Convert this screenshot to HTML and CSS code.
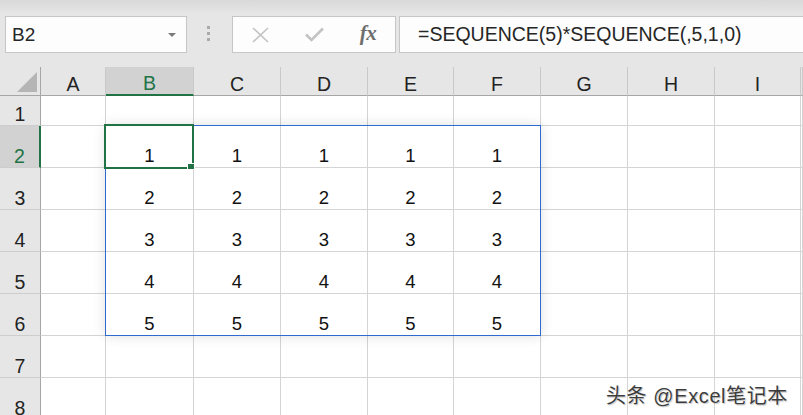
FILE: index.html
```html
<!DOCTYPE html>
<html lang="zh">
<head>
<meta charset="utf-8">
<title>SEQUENCE</title>
<link rel="stylesheet" href="styles.css">
</head>
<body>
<div class="app">
  <div class="toolbar">
    <div class="namebox">
      <span class="name">B2</span>
      <svg class="dd" width="8" height="4" viewBox="0 0 8 4"><path d="M0 0H8L4 4Z" fill="#7a7a7a"/></svg>
    </div>
    <div class="grip"><i></i><i></i><i></i></div>
    <div class="fbtns">
      <span class="btn"><svg width="17" height="16" viewBox="0 0 17 16"><path d="M1 1L16 15M16 1L1 15" stroke="#c3c3c3" stroke-width="1.6" fill="none"/></svg></span>
      <span class="btn"><svg width="19" height="15" viewBox="0 0 19 15"><path d="M1 7.5L6.5 13L18 1.5" stroke="#c3c3c3" stroke-width="2.6" fill="none"/></svg></span>
      <span class="btn fx">fx</span>
    </div>
    <div class="formula">=SEQUENCE(5)*SEQUENCE(,5,1,0)</div>
  </div>

  <div class="sheet">
    <div class="grid">
      <div class="ch corner"><span class="tri"></span></div>
      <div class="ch">A</div><div class="ch sel">B</div><div class="ch">C</div><div class="ch">D</div><div class="ch">E</div><div class="ch">F</div><div class="ch">G</div><div class="ch">H</div><div class="ch">I</div><div class="ch"></div>

      <div class="rh">1</div>
      <div class="c"></div><div class="c"></div><div class="c"></div><div class="c"></div><div class="c"></div><div class="c"></div><div class="c"></div><div class="c"></div><div class="c"></div><div class="c"></div>

      <div class="rh sel">2</div>
      <div class="c"></div><div class="c">1</div><div class="c">1</div><div class="c">1</div><div class="c">1</div><div class="c">1</div><div class="c"></div><div class="c"></div><div class="c"></div><div class="c"></div>

      <div class="rh">3</div>
      <div class="c"></div><div class="c">2</div><div class="c">2</div><div class="c">2</div><div class="c">2</div><div class="c">2</div><div class="c"></div><div class="c"></div><div class="c"></div><div class="c"></div>

      <div class="rh">4</div>
      <div class="c"></div><div class="c">3</div><div class="c">3</div><div class="c">3</div><div class="c">3</div><div class="c">3</div><div class="c"></div><div class="c"></div><div class="c"></div><div class="c"></div>

      <div class="rh">5</div>
      <div class="c"></div><div class="c">4</div><div class="c">4</div><div class="c">4</div><div class="c">4</div><div class="c">4</div><div class="c"></div><div class="c"></div><div class="c"></div><div class="c"></div>

      <div class="rh">6</div>
      <div class="c"></div><div class="c">5</div><div class="c">5</div><div class="c">5</div><div class="c">5</div><div class="c">5</div><div class="c"></div><div class="c"></div><div class="c"></div><div class="c"></div>

      <div class="rh">7</div>
      <div class="c"></div><div class="c"></div><div class="c"></div><div class="c"></div><div class="c"></div><div class="c"></div><div class="c"></div><div class="c"></div><div class="c"></div><div class="c"></div>

      <div class="rh">8</div>
      <div class="c"></div><div class="c"></div><div class="c"></div><div class="c"></div><div class="c"></div><div class="c"></div><div class="c"></div><div class="c"></div><div class="c"></div><div class="c"></div>
    </div>
    <div class="spill"></div>
    <div class="active"></div>
    <div class="handle"></div>
  </div>

  <div class="watermark">头条 @Excel笔记本</div>
</div>
</body>
</html>
```

FILE: styles.css
```css
html, body {
  margin: 0;
  padding: 0;
  overflow: hidden;
  background: #ffffff;
}

.app {
  position: relative;
  width: 803px;
  height: 415px;
  overflow: hidden;
  font-family: "Liberation Sans", Arial, "Noto Sans CJK SC", sans-serif;
}

.toolbar {
  height: 67px;
  box-sizing: border-box;
  padding: 16px 0 0 5px;
  display: flex;
  align-items: flex-start;
  background: linear-gradient(#d9d9d9 0px, #e6e6e6 14px, #e6e6e6 100%);
}

.namebox {
  width: 182px;
  height: 37px;
  box-sizing: border-box;
  border: 1px solid #c6c6c6;
  background: #fdfdfd;
  display: flex;
  align-items: center;
  justify-content: space-between;
  padding: 0 10px 0 6px;
}

.name {
  font-size: 19px;
  color: #262626;
}

.dd {
  margin-top: 1px;
}

.grip {
  margin: 10px 0 0 20px;
  width: 3px;
  display: flex;
  flex-direction: column;
  gap: 3px;
}

.grip i {
  display: block;
  width: 3px;
  height: 3px;
  background: #ababab;
}

.fbtns {
  margin-left: 22px;
  width: 164px;
  height: 37px;
  box-sizing: border-box;
  border: 1px solid #c6c6c6;
  background: #fdfdfd;
  display: grid;
  grid-template-columns: 1fr 1fr 1fr;
  align-items: center;
  justify-items: center;
}

.btn {
  display: flex;
  align-items: center;
  justify-content: center;
}

.fx {
  font-family: "Liberation Serif", "Times New Roman", serif;
  font-style: italic;
  font-weight: bold;
  font-size: 21px;
  color: #6e6e6e;
  letter-spacing: -0.5px;
  margin-top: -2px;
}

.formula {
  flex: 1;
  margin-left: 3px;
  margin-right: -4px;
  height: 37px;
  box-sizing: border-box;
  border: 1px solid #c6c6c6;
  border-right: none;
  background: #fdfdfd;
  font-size: 19.5px;
  color: #262626;
  padding-left: 18px;
  display: flex;
  align-items: center;
}

.sheet {
  position: relative;
}

.grid {
  display: grid;
  grid-template-columns: 41px 65px 88px 87px 87px 86px 87px 87px 87px 86px 1fr;
  grid-template-rows: 29px 30px repeat(7, 42px);
}

.grid > div {
  box-sizing: border-box;
  display: flex;
  align-items: flex-end;
  justify-content: center;
  line-height: 22px;
  padding-bottom: 0;
}

.ch {
  background: #e6e6e6;
  border-right: 1px solid #c9c9c9;
  border-bottom: 1px solid #a6a6a6;
  font-size: 19.5px;
  color: #222;
}

.ch.corner {
  border-right: 1px solid #a6a6a6;
  position: relative;
}

.tri {
  position: absolute;
  left: 17px;
  top: 5px;
  width: 20px;
  height: 20px;
  background: #b5b5b5;
  clip-path: polygon(100% 0, 100% 100%, 0 100%);
}

.ch.sel {
  background: #d2d2d2;
  color: #217346;
  border-bottom: 2px solid #217346;
}

.rh {
  background: #e6e6e6;
  border-right: 1px solid #a6a6a6;
  border-bottom: 1px solid #cdcdcd;
  font-size: 19.5px;
  color: #222;
}

.rh.sel {
  background: #d2d2d2;
  color: #217346;
  border-right: 2px solid #217346;
}

.c {
  background: #ffffff;
  border-right: 1px solid #d4d4d4;
  border-bottom: 1px solid #d4d4d4;
  font-size: 18.5px;
  color: #111;
}

.spill {
  position: absolute;
  left: 105px;
  top: 58px;
  width: 436px;
  height: 211px;
  box-sizing: border-box;
  border: 1px solid #2f6ad0;
  box-shadow: 0 0 12px rgba(0, 0, 0, 0.13);
  pointer-events: none;
}

.active {
  position: absolute;
  left: 104px;
  top: 57px;
  width: 90px;
  height: 45px;
  box-sizing: border-box;
  border: 2px solid #217346;
}

.handle {
  position: absolute;
  left: 187px;
  top: 96px;
  width: 8px;
  height: 7px;
  box-sizing: border-box;
  background: #217346;
  border: 1px solid #ffffff;
}

.watermark {
  position: absolute;
  left: 606px;
  top: 380px;
  font-size: 20px;
  letter-spacing: 0.6px;
  color: #3c3c3c;
  white-space: nowrap;
  font-family: "Liberation Sans", Arial, "Noto Sans CJK SC", sans-serif;
  text-shadow: 0 0 1px #ffffff, 1px 1px 1px rgba(0, 0, 0, 0.25);
}
```
